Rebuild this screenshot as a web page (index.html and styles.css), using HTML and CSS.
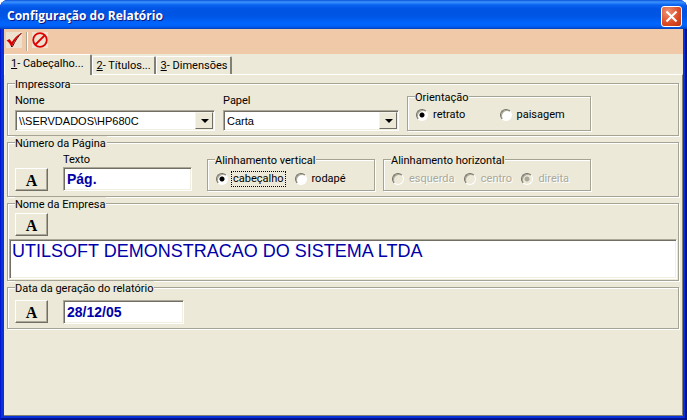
FILE: index.html
```html
<!DOCTYPE html>
<html lang="pt-BR">
<head>
  <meta charset="UTF-8">
  <meta name="viewport" content="width=device-width, initial-scale=1.0">
  <title>Configuração do Relatório</title>
  <link rel="stylesheet" href="styles.css">
</head>
<body>
  <div class="window">
    <header class="titlebar">
      <h1>Configuração do Relatório</h1>
      <button type="button" class="close" aria-label="Fechar">
        <svg width="13" height="13" viewBox="0 0 13 13"><path d="M1.500 1.500L11.500 11.500M11.500 1.500L1.500 11.500" stroke="#fff" stroke-width="2.200"/></svg>
      </button>
    </header>

    <div class="client">
      <!-- Toolbar -->
      <div class="toolbar">
        <button type="button" aria-label="Confirmar">
          <svg width="16" height="16" viewBox="0 0 16 16">
            <path d="M15.500 1C12 4.500 9 9 6.500 14.500H5" fill="none" stroke="#4a0000" stroke-width="1"/>
            <path d="M0.500 8.500L3.500 7L5.800 10C8 6.500 11 3 15.500 1C11.500 4.500 8.500 9 6.200 14H4.800C4 12 2.800 10 0.500 8.500Z" fill="#d80000"/>
          </svg>
        </button>
        <span class="separator"></span>
        <button type="button" aria-label="Cancelar">
          <svg width="16" height="16" viewBox="0 0 16 16"><circle cx="8" cy="8" r="6.800" fill="none" stroke="#e00000" stroke-width="1.800"/><path d="M3.500 12.500L12.500 3.500" stroke="#e00000" stroke-width="1.800"/></svg>
        </button>
      </div>

      <!-- Tabs -->
      <div class="tabs" role="tablist">
        <button type="button" role="tab" class="tab active" aria-selected="true"><u>1</u>- Cabeçalho...</button>
        <button type="button" role="tab" class="tab" aria-selected="false"><u>2</u>- Títulos...</button>
        <button type="button" role="tab" class="tab" aria-selected="false"><u>3</u>- Dimensões</button>
      </div>

      <form class="panel" role="tabpanel">
        <fieldset class="group printing">
          <legend>Impressora</legend>
          <div class="row">
            <div class="field printer">
              <label for="nome">Nome</label>
              <div class="combo">
                <select id="nome"><option>\\SERVDADOS\HP680C</option></select>
              </div>
            </div>
            <div class="field paper">
              <label for="papel">Papel</label>
              <div class="combo">
                <select id="papel"><option>Carta</option></select>
              </div>
            </div>
            <fieldset class="group options orientation">
              <legend>Orientação</legend>
              <div class="radios">
                <label><input type="radio" name="orientacao" checked><span>retrato</span></label>
                <label><input type="radio" name="orientacao"><span>paisagem</span></label>
              </div>
            </fieldset>
          </div>
        </fieldset>

        <fieldset class="group">
          <legend>Número da Página</legend>
          <div class="row page-number">
            <button type="button" class="font-button" aria-label="Fonte do número da página">A</button>
            <div class="field page-text">
              <label for="texto">Texto</label>
              <input type="text" id="texto" class="text" value="Pág.">
            </div>
            <fieldset class="group options vertical">
              <legend>Alinhamento vertical</legend>
              <div class="radios">
                <label><input type="radio" name="vertical" checked><span class="focused">cabeçalho</span></label>
                <label><input type="radio" name="vertical"><span>rodapé</span></label>
              </div>
            </fieldset>
            <fieldset class="group options horizontal" disabled>
              <legend>Alinhamento horizontal</legend>
              <div class="radios">
                <label><input type="radio" name="horizontal"><span>esquerda</span></label>
                <label><input type="radio" name="horizontal"><span>centro</span></label>
                <label><input type="radio" name="horizontal" checked><span>direita</span></label>
              </div>
            </fieldset>
          </div>
        </fieldset>

        <fieldset class="group company">
          <legend>Nome da Empresa</legend>
          <button type="button" class="font-button" aria-label="Fonte do nome da empresa">A</button>
          <textarea class="text" aria-label="Nome da Empresa">UTILSOFT DEMONSTRACAO DO SISTEMA LTDA</textarea>
        </fieldset>

        <fieldset class="group">
          <legend>Data da geração do relatório</legend>
          <div class="row date">
            <button type="button" class="font-button" aria-label="Fonte da data">A</button>
            <input type="text" class="text" aria-label="Data da geração do relatório" value="28/12/05">
          </div>
        </fieldset>
      </form>
    </div>
  </div>
</body>
</html>
```
FILE: styles.css
```css
* {
  box-sizing: border-box;
}
body {
  margin: 0;
  background: #fff;
  color: #000;
  font-family: Roboto, "Liberation Sans", Arial, sans-serif;
  font-size: 11px;
  line-height: 14px;
}
button, input, select, textarea {
  margin: 0;
  font: inherit;
  color: inherit;
  border-radius: 0;
  outline: none;
}

/* Window frame */
.window {
  display: flex;
  flex-direction: column;
  min-height: 100vh;
  padding: 0 4px 4px;
  background: #0831d9;
  border-radius: 8px 8px 0 0;
  box-shadow: inset 1px 0 #0019cf, inset -2px -2px #00138c;
}
.titlebar {
  display: flex;
  align-items: center;
  justify-content: space-between;
  height: 29px;
  margin: 0 -4px;
  padding: 3px 5px 0 7px;
  border-radius: 8px 8px 0 0;
  background: linear-gradient(#0a50d8 0, #3c94ff 2px, #0a62f0 5px, #0054e3 9px, #0055e5 16px, #0066ff 24px, #005bf0 27px, #0340b8 29px);
}
.titlebar h1 {
  margin: 0;
  font: bold 12px/20px "Open Sans", "Noto Sans", sans-serif;
  color: #fff;
  text-shadow: 1px 1px #0a1883;
}
.close {
  display: grid;
  place-items: center;
  width: 21px;
  height: 21px;
  padding: 0;
  border: 1px solid #fff;
  border-radius: 3px;
  background: radial-gradient(circle at 30% 25%, #ee9274, #dc4a24 60%, #b93410);
}
.client {
  flex: 1;
  display: flex;
  flex-direction: column;
  background: #ece9d8;
}

/* Toolbar */
.toolbar {
  display: flex;
  gap: 4px;
  height: 25px;
  padding: 3px 2px;
  background: #f0c9a8;
}
.toolbar button {
  width: 16px;
  height: 16px;
  padding: 0;
  border: 0;
  background: #ece2cf;
}
.toolbar svg {
  display: block;
}
.separator {
  width: 2px;
  height: 19px;
  border-left: 1px solid #aca899;
  border-right: 1px solid #fff;
}

/* Tabs */
.tabs {
  display: flex;
  align-items: flex-end;
  height: 20px;
}
.tab {
  height: 18px;
  padding: 1px 3px 0 4px;
  border: 0;
  border-top: 1px solid #fff;
  border-left: 1px solid #fff;
  border-right: 2px solid #808074;
  border-radius: 2px 2px 0 0;
  background: #ece9d8;
}
.tab.active {
  z-index: 1;
  height: 21px;
  margin-bottom: -1px;
  padding: 0 6px 2px;
}
.panel {
  flex: 1;
  padding: 2px 3px 8px;
  border-top: 1px solid #fff;
  border-right: 1px solid #808074;
  border-bottom: 1px solid #808074;
}

/* Group boxes */
.group {
  min-width: 0;
  margin: 0;
  padding: 3px 7px 4px;
  border: 1px solid #a5a394;
  box-shadow: 1px 1px #fff, inset 1px 1px #fff;
}
.group legend {
  height: 13px;
  padding: 0 1px 0 0;
  line-height: 15px;
  background: #ece9d8;
}
.printing {
  padding-top: 0;
}
.row {
  display: flex;
  align-items: flex-end;
  gap: 8px;
}
.field {
  display: flex;
  flex-direction: column;
}
.field label {
  height: 16px;
}
.printer {
  width: 200px;
}
.paper {
  width: 176px;
}
.page-text {
  width: 129px;
}
.page-text label {
  height: 14px;
}
.page-number {
  padding: 1px 0;
}
.page-text, .date .text {
  margin: 0 7px;
}
.vertical {
  width: 168px;
}
.horizontal {
  width: 208px;
}
.options {
  padding: 6px 7px 4px 8px;
}
.options legend {
  margin-left: -1px;
}
.orientation {
  width: 184px;
  padding: 5px 7px 8px 8px;
}

/* Controls */
.combo, .text {
  border: 1px solid;
  border-color: #aca899 #fff #fff #aca899;
  background: #fff;
  box-shadow: inset 1px 1px #716f64, inset -1px -1px #f1efe2;
  font-family: "Liberation Sans", Arial, sans-serif;
}
.combo {
  position: relative;
  height: 21px;
}
.combo select {
  width: 100%;
  height: 100%;
  padding: 0 20px 0 3px;
  border: 0;
  background: none;
  appearance: none;
}
.combo::before {
  content: "";
  position: absolute;
  top: 1px;
  right: 1px;
  bottom: 1px;
  width: 16px;
  border: 1px solid;
  border-color: #f5f4ec #716f64 #716f64 #f5f4ec;
  background: #ece9d8;
  pointer-events: none;
}
.combo::after {
  content: "";
  position: absolute;
  top: 8px;
  right: 5px;
  border: 4px solid transparent;
  border-top-color: #000;
  border-bottom: 0;
  pointer-events: none;
}
.text {
  height: 24px;
  padding: 0 3px;
  font-size: 14px;
  font-weight: bold;
  color: #0000a8;
}
.font-button {
  width: 33px;
  height: 23px;
  padding: 2px 0 0;
  border: 1px solid;
  border-color: #fff #716f64 #716f64 #fff;
  background: #ece9d8;
  box-shadow: inset -1px -1px #aca899;
  font: bold 16px/18px "Liberation Serif", "Times New Roman", serif;
}
.date {
  align-items: flex-start;
  padding-top: 3px;
}
.date .text {
  width: 121px;
}
.company {
  padding: 3px 1px 1px;
}
.company legend, .company .font-button {
  margin-left: 6px;
}
.company .text {
  display: block;
  width: 100%;
  height: 40px;
  margin-top: 3px;
  padding: 0 2px;
  font-size: 18px;
  font-weight: normal;
  line-height: 22px;
  resize: none;
}

/* Radio buttons */
.radios {
  display: flex;
}
.radios label {
  display: flex;
  align-items: center;
  gap: 4px;
}
.radios span {
  padding: 0 1px;
}
.radios .focused {
  outline: 1px dotted #000;
}
.radios input {
  appearance: none;
  width: 12px;
  height: 12px;
  border: 1px solid;
  border-color: #716f64 #fff #fff #716f64;
  border-radius: 50%;
  background: #fff;
  box-shadow: inset 1px 1px #aca899;
}
.radios input:checked {
  background: radial-gradient(circle, #000 2px, #fff 3px);
}
.orientation .radios label {
  flex: 1;
}
.vertical .radios {
  gap: 10px;
}
.horizontal .radios {
  justify-content: space-between;
  padding-right: 13px;
}
.group:disabled .radios {
  color: #aca899;
  text-shadow: 1px 1px #fff;
}
.group:disabled input {
  background: #ece9d8;
}
.group:disabled input:checked {
  background: radial-gradient(circle, #aca899 2px, #ece9d8 3px);
}
```
